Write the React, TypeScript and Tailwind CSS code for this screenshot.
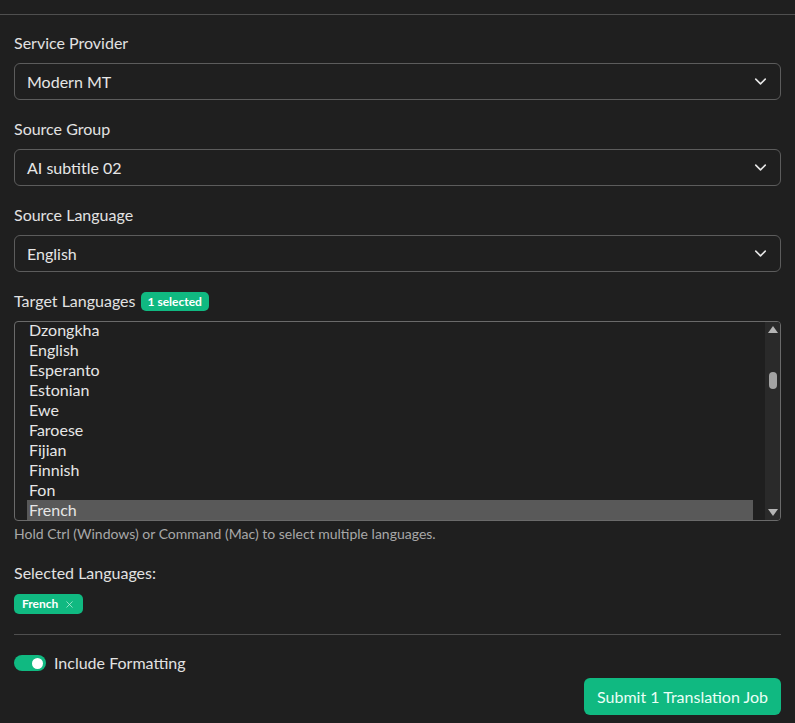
import React from "react";
import { ChevronDown, X } from "lucide-react";

const font = { fontFamily: "Lato, 'Noto Sans', sans-serif" };

function SelectField({ label, value }: { label: string; value: string }) {
  return (
    <div className="mb-[18px]">
      <div className="text-[16px] leading-[22px] text-[#e2e2e2] mb-[9px]">{label}</div>
      <div className="h-[37px] border border-[#5c5c5c] rounded-[6px] flex items-center justify-between pl-[12px] pr-[10px]">
        <span className="text-[16px] text-[#e6e6e6]">{value}</span>
        <ChevronDown size={19} strokeWidth={2} className="text-[#e6e6e6]" />
      </div>
    </div>
  );
}

const langs = ["Dzongkha", "English", "Esperanto", "Estonian", "Ewe", "Faroese", "Fijian", "Finnish", "Fon", "French"];

export default function App() {
  return (
    <div className="w-[795px] h-[723px] bg-[#1f1f1f] overflow-hidden" style={font}>
      <div className="h-[15px] border-b border-[#4f4f4f]" />
      <div className="px-[14px] pt-[17px]">
        <SelectField label="Service Provider" value="Modern MT" />
        <SelectField label="Source Group" value="AI subtitle 02" />
        <SelectField label="Source Language" value="English" />

        <div className="flex items-center gap-[5px] text-[16px] leading-[22px] text-[#e2e2e2] mb-[9px]">
          <span>Target Languages</span>
          <span className="bg-[#10b981] text-white text-[12px] font-bold leading-[19px] px-[7px] rounded-[5px]">1 selected</span>
        </div>

        <div className="h-[200px] border border-[#6a6a6a] rounded-[4px] flex overflow-hidden">
          <div className="flex-1 pl-[12px] pr-[12px] overflow-hidden">
            <div className="-mt-[2px]">
              {langs.map((l) => (
                <div
                  key={l}
                  className={`h-[20px] leading-[20px] pl-[2px] text-[16px] text-[#e6e6e6] ${l === "French" ? "bg-[#595959]" : ""}`}
                >
                  {l}
                </div>
              ))}
            </div>
          </div>
          <div className="w-[15px] bg-[#2a2a2a] flex flex-col items-center relative">
            <div className="mt-[4px] w-0 h-0 border-l-[5px] border-r-[5px] border-b-[7px] border-l-transparent border-r-transparent border-b-[#b5b5b5]" />
            <div className="mt-[39px] w-[8px] h-[17px] rounded-full bg-[#a3a3a3]" />
            <div className="absolute bottom-[4px] w-0 h-0 border-l-[5px] border-r-[5px] border-t-[7px] border-l-transparent border-r-transparent border-t-[#b5b5b5]" />
          </div>
        </div>

        <div className="mt-[4px] text-[14px] leading-[18px] text-[#a8a8a8]">
          Hold Ctrl (Windows) or Command (Mac) to select multiple languages.
        </div>

        <div className="mt-[19px] text-[16px] leading-[22px] text-[#e2e2e2]">Selected Languages:</div>

        <div className="mt-[10px] flex">
          <span className="h-[20px] flex items-center gap-[6px] bg-[#10b981] rounded-[5px] pl-[8px] pr-[8px] text-white text-[12px] font-bold">
            French
            <X size={11} strokeWidth={1.5} className="text-[#c8f3e3]" />
          </span>
        </div>

        <div className="mt-[20px] border-t border-[#4f4f4f]" />

        <div className="mt-[17px] flex items-center gap-[8px]">
          <div className="w-[32px] h-[16px] rounded-full bg-[#10b981] flex items-center justify-end pr-[3px]">
            <div className="w-[11px] h-[11px] rounded-full bg-white" />
          </div>
          <span className="text-[16px] leading-[22px] text-[#e2e2e2]">Include Formatting</span>
        </div>

        <div className="mt-[4px] flex justify-end">
          <button className="h-[37px] px-[13px] bg-[#10b981] rounded-[6px] text-[16px] text-[#eafff6]">
            Submit 1 Translation Job
          </button>
        </div>
      </div>
    </div>
  );
}
